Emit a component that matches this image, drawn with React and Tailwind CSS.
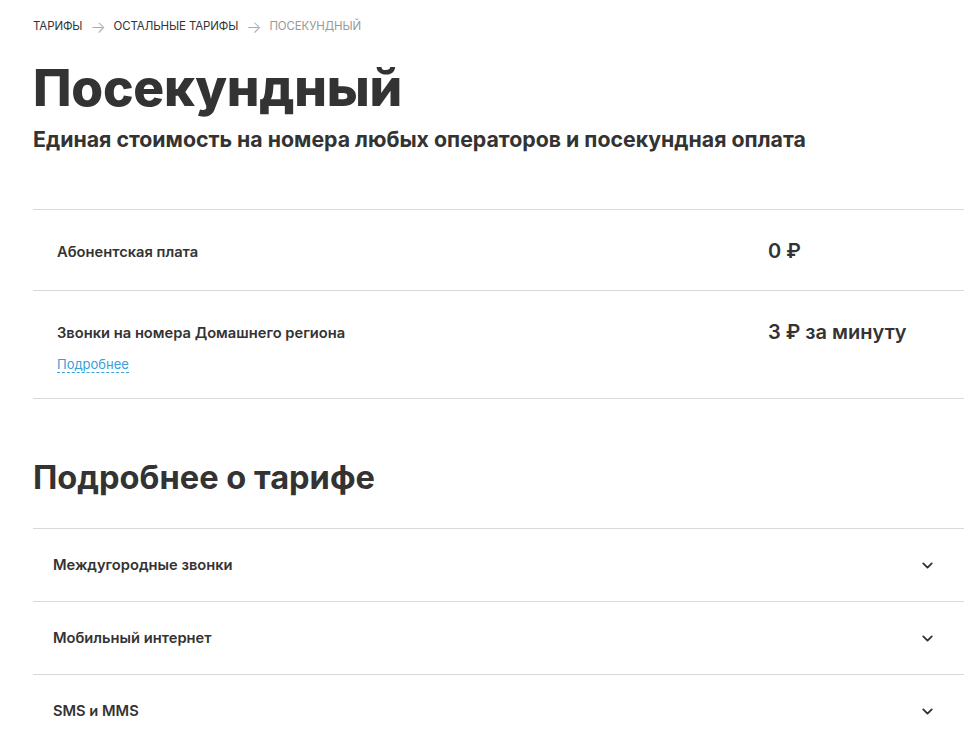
import React from "react";
import { ChevronDown } from "lucide-react";

const font = { fontFamily: "Inter, 'Noto Sans', sans-serif" };

const Breadcrumbs = () => (
  <div className="flex items-center gap-[8px] text-[11.5px] uppercase leading-none tracking-[-0.01em]">
    <span className="text-[#333]">Тарифы</span>
    <span className="text-[#aaa] text-[16px] font-light">→</span>
    <span className="text-[#333]">Остальные тарифы</span>
    <span className="text-[#aaa] text-[16px] font-light">→</span>
    <span className="text-[#999]">Посекундный</span>
  </div>
);

const PriceRow = ({ label, value, link }) => (
  <div className={"flex border-b border-[#d9d9d9] pl-[24px] pt-[32px] " + (link ? "pb-[25px]" : "pb-[28px]")}>
    <div className="flex-1">
      <div className="text-[14.7px] font-semibold text-[#333] leading-[20px]">{label}</div>
      {link && (
        <a className="mt-[13px] block w-fit text-[13px] leading-[16px] text-[#3aa0d8] border-b border-dashed border-[#3aa0d8]">
          {link}
        </a>
      )}
    </div>
    <div className="w-[196px] text-[20px] font-semibold text-[#333] leading-[20px] -mt-[1px]">{value}</div>
  </div>
);

const AccordionRow = ({ title }) => (
  <div className="flex h-[73px] items-center justify-between border-b border-[#d9d9d9] pl-[20px] pr-[28px]">
    <span className="text-[14.7px] font-semibold text-[#333]">{title}</span>
    <ChevronDown size={17} strokeWidth={2.6} className="text-[#333]" />
  </div>
);

export default function App() {
  return (
    <div className="min-h-screen bg-white pl-[33px] pr-[7px] pt-[19px]" style={font}>
      <Breadcrumbs />
      <h1 className="mt-[22px] text-[51.5px] font-extrabold leading-[60px] text-[#333] tracking-[-0.005em]">
        Посекундный
      </h1>
      <p className="mt-[9px] text-[21.3px] font-bold leading-[26px] text-[#333]">
        Единая стоимость на номера любых операторов и посекундная оплата
      </p>

      <div className="mt-[57px] border-t border-[#d9d9d9]">
        <PriceRow label="Абонентская плата" value="0 ₽" />
        <PriceRow label="Звонки на номера Домашнего региона" value="3 ₽ за минуту" link="Подробнее" />
      </div>

      <h2 className="mt-[58px] text-[32.6px] font-bold leading-[40px] text-[#333]">Подробнее о тарифе</h2>

      <div className="mt-[31px] border-t border-[#d9d9d9]">
        <AccordionRow title="Междугородные звонки" />
        <AccordionRow title="Мобильный интернет" />
        <AccordionRow title="SMS и MMS" />
      </div>
    </div>
  );
}
